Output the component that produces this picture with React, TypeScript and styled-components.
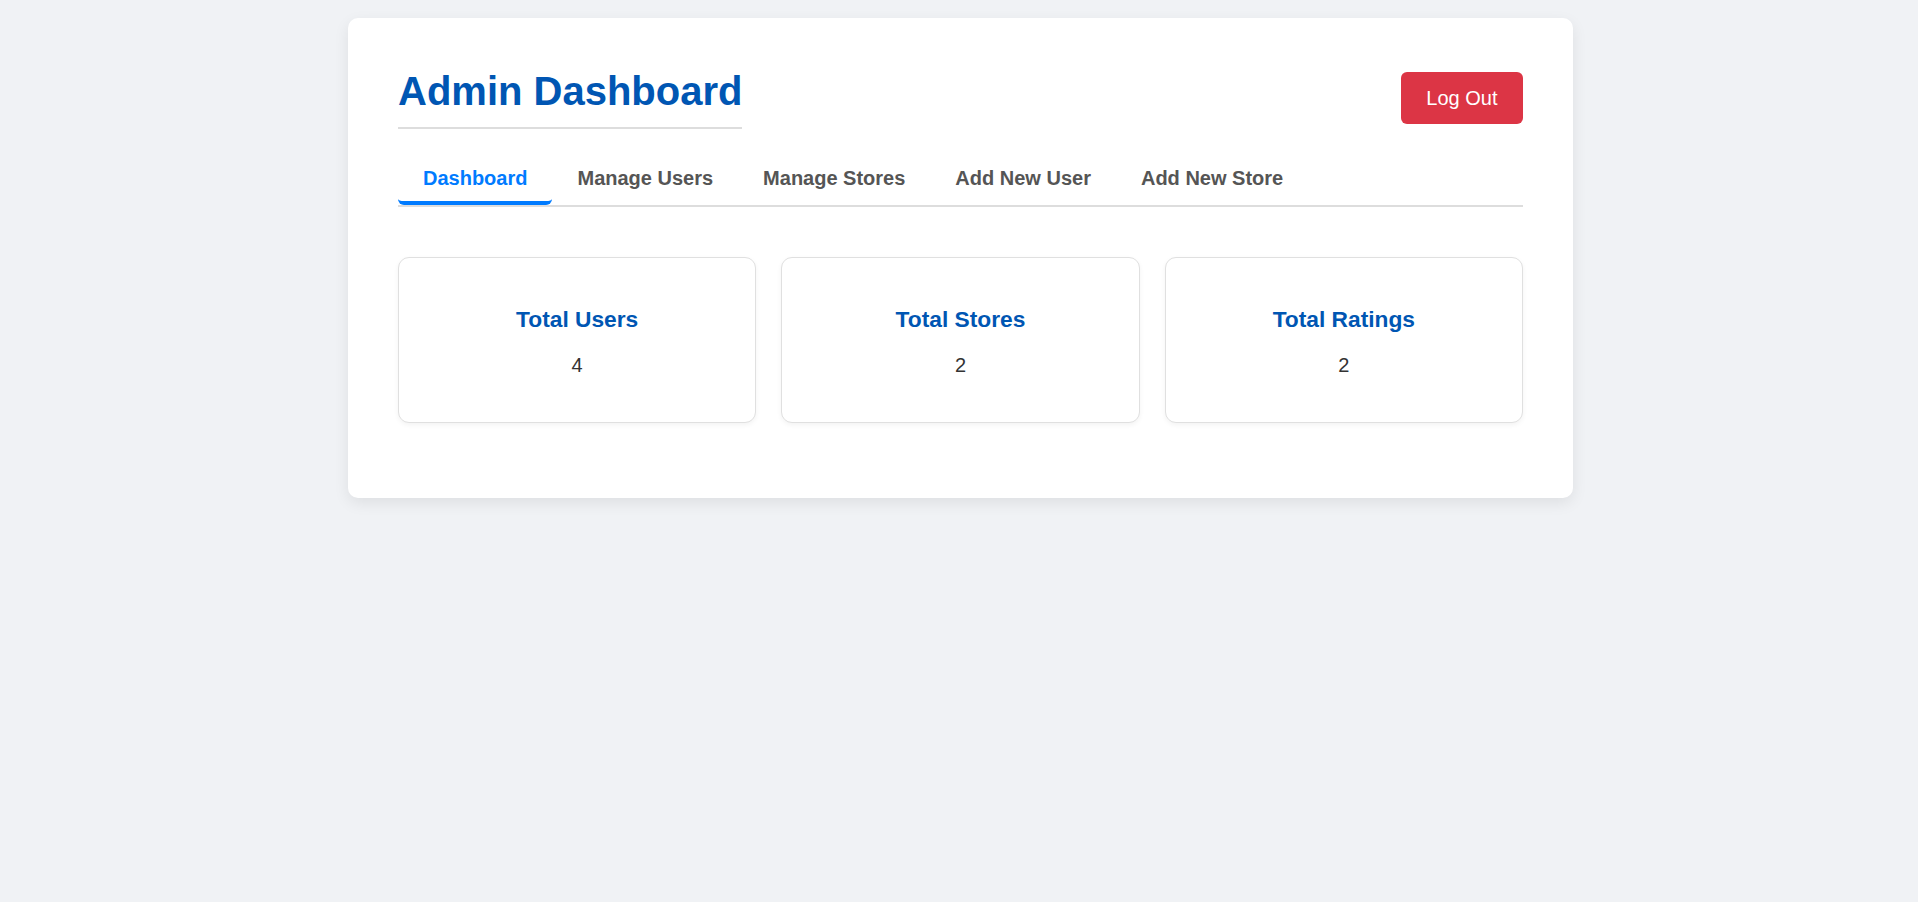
import React, { useState } from "react";
import styled, { createGlobalStyle } from "styled-components";

const GlobalStyle = createGlobalStyle`
  html, body {
    margin: 0;
    padding: 0;
    background: #f0f2f5;
    font-family: "Liberation Sans", Arial, Helvetica, sans-serif;
  }
  * { box-sizing: border-box; }
`;

const Page = styled.div`
  min-height: 902px;
  padding: 18px 0 18px 3px;
  background: #f0f2f5;
`;

const Panel = styled.div`
  width: 1225px;
  margin: 0 auto;
  padding: 50px;
  background: #ffffff;
  border-radius: 10px;
  box-shadow: 0 5px 15px rgba(0, 0, 0, 0.08);
`;

const Header = styled.header`
  display: flex;
  justify-content: space-between;
  align-items: center;
  margin-bottom: 25px;
`;

const Title = styled.h1`
  display: inline-block;
  margin: 0;
  padding-bottom: 12.5px;
  font-size: 40px;
  font-weight: 700;
  line-height: 46px;
  color: #0056b3;
  border-bottom: 2px solid #dddddd;
`;

const LogoutButton = styled.button`
  font-family: inherit;
  font-size: 20px;
  line-height: 23px;
  padding: 14.5px 25.5px;
  border: none;
  border-radius: 6px;
  background: #dc3545;
  color: #ffffff;
  cursor: pointer;
`;

const TabBar = styled.nav`
  display: flex;
  border-bottom: 2px solid #dddddd;
  margin-bottom: 50px;
`;

const Tab = styled.button<{ $active?: boolean }>`
  font-family: inherit;
  font-size: 20px;
  font-weight: 700;
  line-height: 23px;
  padding: 13px 25px 11px;
  background: transparent;
  border: none;
  border-bottom: 4px solid ${(p) => (p.$active ? "#007bff" : "transparent")};
  border-radius: 6px;
  color: ${(p) => (p.$active ? "#007bff" : "#555555")};
  cursor: pointer;
`;

const StatsGrid = styled.div`
  display: grid;
  grid-template-columns: repeat(3, 1fr);
  gap: 25px;
  margin-bottom: 25px;
`;

const StatCard = styled.div`
  background: #ffffff;
  border: 1px solid #e0e0e0;
  border-radius: 11px;
  padding: 25px;
  text-align: center;
  box-shadow: 0 2px 5px rgba(0, 0, 0, 0.05);
`;

const StatLabel = styled.h3`
  margin: 23px 0 22px;
  font-size: 22.75px;
  font-weight: 700;
  line-height: 26px;
  color: #0056b3;
`;

const StatValue = styled.p`
  margin: 0 0 20px;
  font-size: 20px;
  line-height: 23px;
  color: #333333;
`;

const tabs = ["Dashboard", "Manage Users", "Manage Stores", "Add New User", "Add New Store"];

const stats = [
  { label: "Total Users", value: 4 },
  { label: "Total Stores", value: 2 },
  { label: "Total Ratings", value: 2 },
];

export default function App() {
  const [active, setActive] = useState("Dashboard");
  return (
    <>
      <GlobalStyle />
      <Page>
        <Panel>
          <Header>
            <Title>Admin Dashboard</Title>
            <LogoutButton>Log Out</LogoutButton>
          </Header>
          <TabBar>
            {tabs.map((t) => (
              <Tab key={t} $active={t === active} onClick={() => setActive(t)}>
                {t}
              </Tab>
            ))}
          </TabBar>
          <StatsGrid>
            {stats.map((s) => (
              <StatCard key={s.label}>
                <StatLabel>{s.label}</StatLabel>
                <StatValue>{s.value}</StatValue>
              </StatCard>
            ))}
          </StatsGrid>
        </Panel>
      </Page>
    </>
  );
}
